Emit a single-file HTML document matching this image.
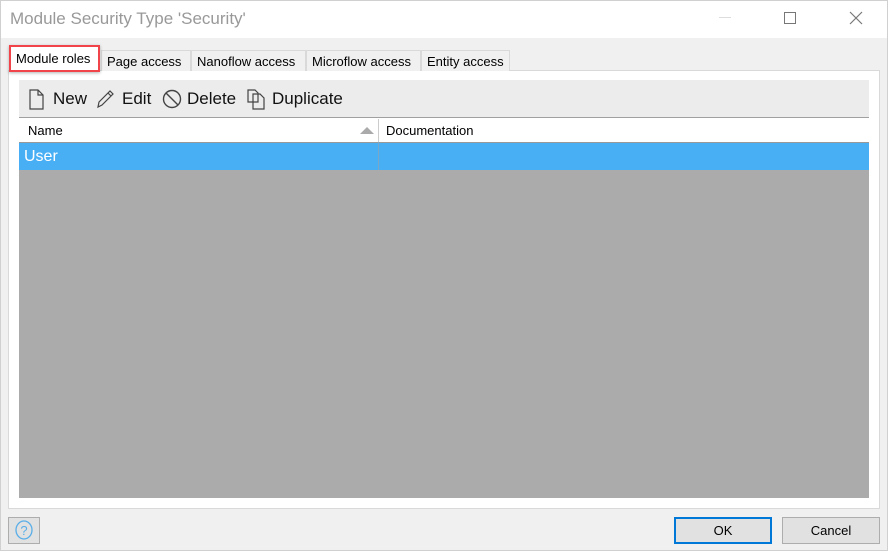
<!DOCTYPE html>
<html><head><style>
*{margin:0;padding:0;box-sizing:border-box}
body{width:888px;height:551px;background:#f0f0f0;font-family:"Liberation Sans",sans-serif;position:relative;overflow:hidden}
.a{position:absolute}
.tab{position:absolute;top:50px;height:21px;background:#f0f0f0;border:1px solid #d9d9d9;border-bottom:none;font-size:13px;color:#000;padding:3px 0 0 5px}
.tb{position:absolute;top:89px;font-size:17px;color:#111}
.btn{position:absolute;top:517px;height:27px;width:98px;background:#e1e1e1;border:1px solid #adadad;font-size:13px;text-align:center;line-height:25px}
</style></head><body>
<div class="a" style="left:0;top:0;width:888px;height:38px;background:#fff"></div>
<div class="a" style="left:10px;top:9px;font-size:17px;color:#999">Module Security Type 'Security'</div>
<div class="a" style="left:719px;top:17px;width:12px;height:1px;background:#ddd"></div>
<div class="a" style="left:784px;top:12px;width:12px;height:12px;border:1px solid #777"></div>
<svg class="a" style="left:849px;top:11px" width="14" height="14"><path d="M1 1L13 13M13 1L1 13" stroke="#777" stroke-width="1.2"/></svg>
<div class="a" style="left:8px;top:70px;width:872px;height:439px;background:#fff;border:1px solid #d9d9d9"></div>
<div class="tab" style="left:101px;width:90px">Page access</div>
<div class="tab" style="left:191px;width:115px">Nanoflow access</div>
<div class="tab" style="left:306px;width:115px">Microflow access</div>
<div class="tab" style="left:421px;width:89px">Entity access</div>
<div class="a" style="left:9px;top:45px;width:91px;height:27px;background:#fff;border:2px solid #f0444a;font-size:13px;padding:4px 0 0 5px;box-shadow:0 1px 3px rgba(0,0,0,.3)">Module roles</div>
<div class="a" style="left:19px;top:80px;width:850px;height:38px;background:#ececec;border-bottom:1px solid #a0a0a0"></div>
<svg class="a" style="left:28px;top:89px" width="80" height="22"><path d="M2 1h8l5 5v14H2z M10 1v5h5" fill="none" stroke="#444" stroke-width="1.2"/></svg>
<div class="tb" style="left:53px">New</div>
<svg class="a" style="left:96px;top:88px" width="22" height="22"><path d="M2 19l1-5L14 3l3 3L6 17z M12 5l3 3" fill="none" stroke="#444" stroke-width="1.2"/></svg>
<div class="tb" style="left:122px">Edit</div>
<svg class="a" style="left:162px;top:88px" width="22" height="22"><circle cx="10" cy="11" r="8.5" fill="none" stroke="#444" stroke-width="1.4"/><path d="M4 5l12 12" stroke="#444" stroke-width="1.4"/></svg>
<div class="tb" style="left:187px">Delete</div>
<svg class="a" style="left:247px;top:88px" width="22" height="22"><path d="M1 2h7l3 3v9H1z M6 6h7l4 4v11H6z" fill="#ececec" stroke="#444" stroke-width="1.2"/></svg>
<div class="tb" style="left:272px">Duplicate</div>
<div class="a" style="left:19px;top:119px;width:850px;height:23px;background:#fff"></div>
<div class="a" style="left:378px;top:119px;width:1px;height:50px;background:#ccc"></div>
<div class="a" style="left:28px;top:123px;font-size:13px">Name</div>
<div class="a" style="left:386px;top:123px;font-size:13px">Documentation</div>
<svg class="a" style="left:360px;top:126px" width="14" height="8"><path d="M0 8L7 1L14 8z" fill="#aaa"/></svg>
<div class="a" style="left:19px;top:142px;width:850px;height:28px;background:#48aff5;border-top:1px solid #999"></div>
<div class="a" style="left:378px;top:142px;width:1px;height:28px;background:#7aa7c8"></div>
<div class="a" style="left:24px;top:148px;font-size:16px;color:#fff">User</div>
<div class="a" style="left:19px;top:170px;width:850px;height:328px;background:#ababab"></div>
<div class="a" style="left:8px;top:517px;width:32px;height:27px;background:#e1e1e1;border:1px solid #adadad"></div>
<svg class="a" style="left:13px;top:519px" width="22" height="22"><ellipse cx="11" cy="11" rx="8" ry="9" fill="none" stroke="#5aaee8" stroke-width="1.3"/><text x="11" y="16" font-size="13" text-anchor="middle" fill="#5aaee8" font-family="Liberation Sans">?</text></svg>
<div class="btn" style="left:674px;border:2px solid #0078d7;line-height:23px">OK</div>
<div class="btn" style="left:782px">Cancel</div>
<div class="a" style="left:0;top:0;width:888px;height:551px;border:1px solid #d0d0d0;pointer-events:none"></div>
</body></html>
